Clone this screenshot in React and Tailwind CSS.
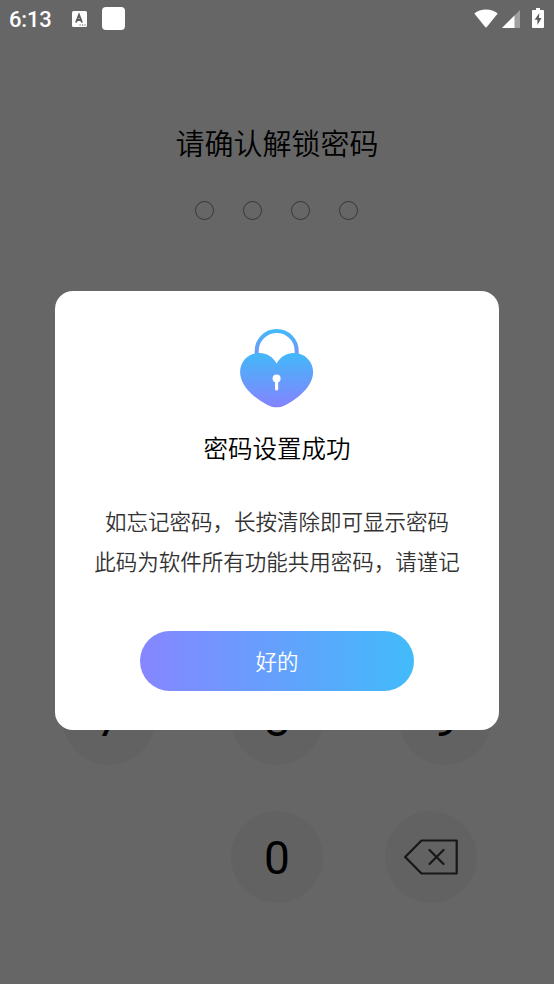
import React from 'react';

const StatusBar = () => (
    <div className="absolute inset-x-0 top-0 z-20 flex h-[37px] items-center justify-between pl-[9px] pr-[10px] text-white">
        <div className="flex items-center">
            <span className="w-[63px] pt-[3px] text-[22px] leading-none font-medium tracking-[-0.2px]">6:13</span>
            <svg width="15" height="16" viewBox="0 0 15 16" className="shrink-0">
                <rect width="15" height="16" rx="1.5" fill="#fff" />
                <path d="M4 11.5 L7 3.8 L10 11.5 M5 9 H9" fill="none" stroke="#5c5c5c" strokeWidth="1.9" />
                <path d="M7.5 14 h1.2 M10 14 h1.2 M12.4 14 h1.2" stroke="#5c5c5c" strokeWidth="1.2" />
            </svg>
            <div className="ml-[15px] h-[23px] w-[23px] rounded-[4px] bg-white" />
        </div>
        <div className="flex items-center">
            <svg width="24" height="19" viewBox="0 0 24 19">
                <path d="M0.3 4.6 C6.5 -0.9 17.5 -0.9 23.7 4.6 L12.8 18 Q12 18.9 11.2 18 Z" fill="#fff" />
            </svg>
            <svg width="18" height="18" viewBox="0 0 18 18" className="ml-[4px]">
                <path d="M0 18 L18 0 V18 Z" fill="#a0a0a0" />
                <path d="M0 18 L12.5 5.5 V18 Z" fill="#fff" />
            </svg>
            <svg width="12" height="20" viewBox="0 0 12 20" className="-mt-px ml-[12px]">
                <path d="M4 0 H8 V2 H11 Q12 2 12 3 V19 Q12 20 11 20 H1 Q0 20 0 19 V3 Q0 2 1 2 H4 Z" fill="#fff" />
                <path d="M7.4 5 L2.6 11.8 H5.4 V17 L9.6 10.1 H6.9 Z" fill="#5c5c5c" />
            </svg>
        </div>
    </div>
);

const Key = ({ children }) => (
    <button className="flex h-[92px] w-[92px] items-center justify-center rounded-full bg-[#f5f5f5] pt-[2px] text-[46px] leading-none text-black">
        {children}
    </button>
);

const LockScreen = () => (
    <div className="flex h-full flex-col items-center bg-white">
        <h1 className="mt-[123px] text-[29px] leading-[44px] font-[350] text-black">请确认解锁密码</h1>
        <div className="mt-[34px] mr-px flex gap-[29px]">
            {[0, 1, 2, 3].map(i => (
                <span key={i} className="h-[19px] w-[19px] rounded-full border border-[#888]" />
            ))}
        </div>
        <div className="mt-auto mb-[81px] flex flex-col gap-[46px]">
            <div className="flex gap-[76px]">
                {['7', '8', '9'].map(n => <Key key={n}>{n}</Key>)}
            </div>
            <div className="flex gap-[62px] pl-[168px]">
                <Key>0</Key>
                <button className="flex h-[92px] w-[92px] items-center justify-center rounded-full bg-[#f5f5f5]">
                    <svg width="54" height="36" viewBox="0 0 54 36" fill="none" stroke="#3a3a3a" strokeWidth="2.2" strokeLinecap="round" strokeLinejoin="round">
                        <path d="M1.2 18 L17.5 1.5 H52.7 V34.5 H17.5 Z" />
                        <path d="M25.5 11 L39.5 25 M39.5 11 L25.5 25" />
                    </svg>
                </button>
            </div>
        </div>
    </div>
);

const HeartLock = () => (
    <svg width="74" height="79" viewBox="0 0 74 79">
        <defs>
            <linearGradient id="shackle" x1="0" y1="0" x2="0" y2="1">
                <stop offset="0" stopColor="#44b8f9" />
                <stop offset="1" stopColor="#7893fb" />
            </linearGradient>
            <linearGradient id="heart" x1="0" y1="0" x2="0" y2="1">
                <stop offset="0" stopColor="#42b8f8" />
                <stop offset="1" stopColor="#8583ff" />
            </linearGradient>
        </defs>
        <path d="M16.7 27 V22 A20 20 0 0 1 56.7 22 V27" fill="none" stroke="url(#shackle)" strokeWidth="4" />
        <path
            d="M36.6 34.5 C32.6 27.5 26.6 24 19.6 24 C8.6 24 0.1 32 0.1 43 C0.1 56 12.6 68 26.6 75.5 C33.6 79.3 39.6 79.3 46.6 75.5 C60.6 68 73.1 56 73.1 43 C73.1 32 64.6 24 53.6 24 C46.6 24 40.6 27.5 36.6 34.5 Z"
            fill="url(#heart)"
        />
        <circle cx="36.6" cy="49.5" r="4" fill="#fff" />
        <path d="M36.6 51 V60" stroke="#fff" strokeWidth="3.2" strokeLinecap="round" />
    </svg>
);

const SuccessDialog = () => (
    <div className="absolute inset-0 z-10 flex items-start justify-center bg-black/60 pt-[291px]">
        <div className="flex h-[439px] w-[443.5px] flex-col items-center rounded-[18px] bg-white pt-[38px]">
            <HeartLock />
            <h2 className="mt-[24px] text-[24.5px] leading-9 font-[350] text-black">密码设置成功</h2>
            <div className="mt-[35px] text-center text-[21.5px] leading-[39.5px] font-[350] whitespace-nowrap text-[#333]">
                <p>如忘记密码，长按清除即可显示密码</p>
                <p>此码为软件所有功能共用密码，请谨记</p>
            </div>
            <button className="mt-[49px] h-[60px] w-[274px] rounded-full bg-linear-to-r/srgb from-[#8686ff] to-[#42bbfa] pt-[4px] text-[21.5px] font-[350] text-white">
                好的
            </button>
        </div>
    </div>
);

const App = () => (
    <div className="relative h-[984px] w-[554px] overflow-hidden font-[Roboto,'Noto_Sans_CJK_SC',sans-serif]">
        <StatusBar />
        <LockScreen />
        <SuccessDialog />
    </div>
);

export default App;
